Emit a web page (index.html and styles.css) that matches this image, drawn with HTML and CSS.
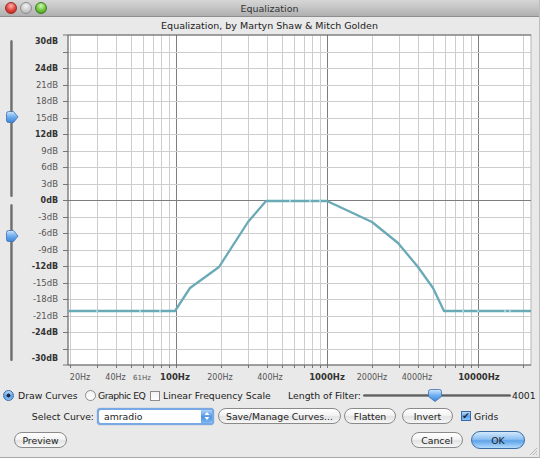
FILE: index.html
```html
<!DOCTYPE html>
<html lang="en">
<head>
    <meta charset="UTF-8">
    <title>Equalization</title>
    <link rel="stylesheet" href="styles.css">
</head>
<body>
    <div class="window">
        <div class="titlebar">
            <div class="lights">
                <span class="light red"></span>
                <span class="light off"></span>
                <span class="light green"></span>
            </div>
            <div class="title">Equalization</div>
        </div>

        <div class="subtitle">Equalization, by Martyn Shaw &amp; Mitch Golden</div>

        <div class="graph-area">
            <div class="vsliders">
                <div class="vslider">
                    <div class="vtrack"></div>
                    <svg class="vthumb thumb-top" width="14" height="12" viewBox="0 0 14 12">
                        <path d="M1.5 2.5 Q1.5 0.5 3.5 0.5 H8.5 L13 6 L8.5 11.5 H3.5 Q1.5 11.5 1.5 9.5 Z" fill="url(#thumbGrad)" stroke="#3d6fae" stroke-width="0.8"/>
                    </svg>
                </div>
                <div class="vslider">
                    <div class="vtrack"></div>
                    <svg class="vthumb thumb-bottom" width="14" height="12" viewBox="0 0 14 12">
                        <path d="M1.5 2.5 Q1.5 0.5 3.5 0.5 H8.5 L13 6 L8.5 11.5 H3.5 Q1.5 11.5 1.5 9.5 Z" fill="url(#thumbGrad)" stroke="#3d6fae" stroke-width="0.8"/>
                    </svg>
                </div>
            </div>

            <svg class="graph" width="517" height="353" viewBox="20 33 517 353">
                <defs>
                    <linearGradient id="thumbGrad" x1="0" y1="0" x2="0" y2="1">
                        <stop offset="0" stop-color="#cfe6fb"/>
                        <stop offset="0.5" stop-color="#6eaef0"/>
                        <stop offset="1" stop-color="#3d86dc"/>
                    </linearGradient>
                </defs>
                <rect x="68" y="35" width="463" height="330" fill="#fff" stroke="#b5b5b5"/>
                <g id="grid"></g>
                <line x1="68" y1="35" x2="531" y2="35" class="axis"/>
                <line x1="68" y1="35" x2="68" y2="365" class="axis"/>
                <line x1="68" y1="365" x2="531" y2="365" class="axis"/>

                <polyline class="curve" points="68,311 175,311 190,288 219,267 248,222 266,201 327,201 372,222 398,243 418,267 433,288 444,311 531,311"/>
                <g class="pts">
                    <circle cx="97" cy="311" r="1"/><circle cx="140" cy="311" r="1"/><circle cx="160" cy="311" r="1"/>
                    <circle cx="290" cy="201" r="1"/><circle cx="310" cy="201" r="1"/><circle cx="320" cy="201" r="1"/>
                    <circle cx="463" cy="311" r="1"/><circle cx="478" cy="311" r="1"/><circle cx="505" cy="311" r="1"/><circle cx="510" cy="311" r="1"/>
                </g>

                <g class="dblabels">
                    <text x="58" y="44" class="major">30dB</text>
                    <text x="58" y="71" class="major">24dB</text>
                    <text x="58" y="87.5">21dB</text>
                    <text x="58" y="104">18dB</text>
                    <text x="58" y="120.5">15dB</text>
                    <text x="58" y="137" class="major">12dB</text>
                    <text x="58" y="153.5">9dB</text>
                    <text x="58" y="170">6dB</text>
                    <text x="58" y="186.5">3dB</text>
                    <text x="58" y="203" class="major">0dB</text>
                    <text x="58" y="219.5">-3dB</text>
                    <text x="58" y="236">-6dB</text>
                    <text x="58" y="252.5">-9dB</text>
                    <text x="58" y="269" class="major">-12dB</text>
                    <text x="58" y="285.5">-15dB</text>
                    <text x="58" y="302">-18dB</text>
                    <text x="58" y="318.5">-21dB</text>
                    <text x="58" y="335" class="major">-24dB</text>
                    <text x="58" y="361" class="major">-30dB</text>
                </g>

                <g class="hzlabels">
                    <text x="80" y="380">20Hz</text>
                    <text x="115.5" y="380">40Hz</text>
                    <text x="142" y="380" class="tiny">61Hz</text>
                    <text x="175" y="380" class="major">100Hz</text>
                    <text x="220" y="380">200Hz</text>
                    <text x="270" y="380">400Hz</text>
                    <text x="327" y="380" class="major">1000Hz</text>
                    <text x="372" y="380">2000Hz</text>
                    <text x="417" y="380">4000Hz</text>
                    <text x="479" y="380" class="major">10000Hz</text>
                </g>
            </svg>
        </div>

        <div class="row row-mode">
            <label class="opt opt-draw"><span class="radio on"></span>Draw Curves</label>
            <label class="opt opt-graphic"><span class="radio"></span>Graphic EQ</label>
            <label class="opt opt-linear"><span class="check"></span>Linear Frequency Scale</label>
            <span class="filter-label">Length of Filter:</span>
            <div class="hslider">
                <div class="htrack"></div>
                <svg class="hthumb" width="14" height="13" viewBox="0 0 14 13">
                    <path d="M0.5 2.5 Q0.5 0.5 2.5 0.5 H11.5 Q13.5 0.5 13.5 2.5 V7.5 L7 12.5 L0.5 7.5 Z" fill="url(#thumbGrad)" stroke="#3d6fae" stroke-width="0.8"/>
                </svg>
            </div>
            <span class="filter-value">4001</span>
        </div>

        <div class="row row-curve">
            <span class="select-label">Select Curve:</span>
            <div class="select">
                <span class="select-text">amradio</span>
                <span class="stepper">
                    <svg width="6" height="10" viewBox="0 0 6 10"><path d="M0.5 4 L3 1 L5.5 4 Z M0.5 6 L3 9 L5.5 6 Z" fill="#fff"/></svg>
                </span>
            </div>
            <button class="button btn-save">Save/Manage Curves...</button>
            <button class="button btn-flatten">Flatten</button>
            <button class="button btn-invert">Invert</button>
            <label class="opt opt-grids"><span class="check on">&#10004;</span>Grids</label>
        </div>

        <div class="row row-actions">
            <button class="button btn-preview">Preview</button>
            <button class="button btn-cancel">Cancel</button>
            <button class="button btn-ok">OK</button>
        </div>

        <svg class="grip" width="8" height="8" viewBox="0 0 8 8">
            <path d="M8 1 L1 8 M8 4 L4 8 M8 7 L7 8" stroke="#aaa" stroke-width="0.8"/>
        </svg>
    </div>

    <script>
        // grid lines for the log frequency / dB plot
        const grid = document.getElementById('grid');
        const ns = 'http://www.w3.org/2000/svg';
        const xOf = f => 176 + 151 * Math.log10(f / 100);
        const yOf = db => 200 - db * 5.5;

        function addLine(x1, y1, x2, y2, cls) {
            const l = document.createElementNS(ns, 'line');
            l.setAttribute('x1', x1);
            l.setAttribute('y1', y1);
            l.setAttribute('x2', x2);
            l.setAttribute('y2', y2);
            l.setAttribute('class', cls);
            grid.appendChild(l);
        }

        [10, 100, 1000, 10000].forEach(decade => {
            for (let k = 1; k <= 9; k++) {
                const f = k * decade;
                if (f < 20 || f > 20000) continue;
                const x = Math.round(xOf(f)) + 0.5;
                addLine(x, 35, x, 365, k === 1 ? 'gl major' : 'gl');
                addLine(x, 365, x, 368, 'tick');
            }
        });

        for (let db = -27; db <= 27; db += 3) {
            const y = Math.round(yOf(db)) + 0.5;
            addLine(68, y, 531, y, db === 0 ? 'gl major' : 'gl');
            addLine(63, y, 68, y, 'tick');
        }
        addLine(63, 35, 68, 35, 'tick');
        addLine(63, 365, 68, 365, 'tick');
    </script>
</body>
</html>
```

FILE: styles.css
```css
body {
    margin: 0;
    background-color: #e9e9e9;
    font-family: "DejaVu Sans", Verdana, sans-serif;
    color: #222;
    overflow: hidden;
}
.window {
    position: relative;
    width: 540px;
    height: 458px;
    background-color: #e9e9e9;
    box-sizing: border-box;
    border-right: 1px solid #bdbdbd;
    border-bottom: 1px solid #a8a8a8;
}
.titlebar {
    position: relative;
    height: 16px;
    background: linear-gradient(#d6d6d6, #c0c0c0 60%, #b0b0b0);
    border-bottom: 1px solid #8e8e8e;
    display: flex;
    align-items: center;
    justify-content: center;
}
.lights {
    position: absolute;
    left: 5px;
    top: 2px;
    display: flex;
    gap: 3px;
}
.light {
    width: 12px;
    height: 12px;
    border-radius: 50%;
    box-sizing: border-box;
}
.light.red {
    background: radial-gradient(circle at 50% 30%, #ffb3ad, #e0433b 55%, #b0231c);
    border: 1px solid #9b2a23;
}
.light.off {
    background: radial-gradient(circle at 50% 30%, #f3f3f3, #c9c9c9 60%, #a9a9a9);
    border: 1px solid #8f8f8f;
}
.light.green {
    background: radial-gradient(circle at 50% 30%, #d3f7b0, #6bc33a 55%, #3f8e1e);
    border: 1px solid #3c7c22;
}
.title {
    font-size: 9.5px;
    color: #333;
}
.subtitle {
    height: 16px;
    line-height: 17px;
    font-size: 9.5px;
    text-align: center;
    color: #222;
}
.graph-area {
    display: flex;
    height: 353px;
}
.vsliders {
    width: 20px;
    display: flex;
    flex-direction: column;
    padding-top: 7px;
    gap: 7px;
}
.vslider {
    position: relative;
    height: 157px;
}
.vtrack {
    width: 3px;
    height: 100%;
    margin-left: 9.5px;
    border-radius: 2px;
    background: linear-gradient(90deg, #9a9a9a, #6f6f6f 50%, #a8a8a8);
}
.vthumb {
    position: absolute;
    left: 5px;
}
.thumb-top {
    top: 71px;
}
.thumb-bottom {
    top: 26px;
}
.graph {
    display: block;
}
.graph .gl {
    stroke: #cdcdcd;
    stroke-width: 1;
}
.graph .gl.major {
    stroke: #7d7d7d;
}
.graph .tick {
    stroke: #777;
    stroke-width: 1;
}
.graph .axis {
    stroke: #666;
    stroke-width: 1;
}
.graph .curve {
    fill: none;
    stroke: #6aaab7;
    stroke-width: 2.3;
    stroke-linejoin: round;
}
.graph .pts circle {
    fill: #b8dde6;
}
.dblabels text {
    font-family: "DejaVu Sans", sans-serif;
    font-size: 8.5px;
    fill: #555;
    text-anchor: end;
}
.dblabels text.major {
    fill: #333;
    font-weight: bold;
    font-size: 8px;
}
.hzlabels text {
    font-family: "DejaVu Sans", sans-serif;
    font-size: 8px;
    fill: #555;
    text-anchor: middle;
}
.hzlabels text.major {
    fill: #333;
    font-weight: bold;
    font-size: 8.5px;
}
.hzlabels text.tiny {
    font-size: 7px;
}
.row {
    display: flex;
    align-items: center;
    font-size: 9.3px;
    color: #222;
}
.row-mode {
    height: 19px;
    padding-left: 3px;
}
.row-curve {
    height: 22px;
}
.row-actions {
    height: 26px;
    padding-left: 14px;
    padding-right: 14px;
}
.opt {
    display: flex;
    align-items: center;
    gap: 4px;
    white-space: nowrap;
}
.opt-draw {
    width: 82px;
}
.opt-graphic {
    width: 65px;
    gap: 2px;
    letter-spacing: -0.5px;
}
.opt-linear {
    width: 138px;
    gap: 3px;
}
.radio {
    width: 11px;
    height: 11px;
    border-radius: 50%;
    box-sizing: border-box;
    border: 1px solid #8c8c8c;
    background: linear-gradient(#f2f2f2, #fff);
    flex-shrink: 0;
}
.radio.on {
    border-color: #3a6aa8;
    background: radial-gradient(circle, #1d2a3a 0 1.8px, transparent 2.2px), linear-gradient(#bcdcfa, #5c9fe8 55%, #8cc3f5);
}
.check {
    width: 10px;
    height: 10px;
    box-sizing: border-box;
    border: 1px solid #8c8c8c;
    background: linear-gradient(#f2f2f2, #fff);
    flex-shrink: 0;
    font-size: 9px;
    line-height: 9px;
    text-align: center;
    color: #1c2633;
}
.check.on {
    border-color: #3a6aa8;
    background: linear-gradient(#bcdcfa, #5c9fe8 55%, #8cc3f5);
}
.filter-label {
    width: 75px;
    white-space: nowrap;
}
.hslider {
    position: relative;
    width: 148px;
    height: 14px;
}
.htrack {
    margin-top: 5px;
    height: 3px;
    border-radius: 2px;
    background: linear-gradient(#9a9a9a, #5f5f5f 50%, #a8a8a8);
}
.hthumb {
    position: absolute;
    left: 65px;
    top: 0;
}
.filter-value {
    margin-left: 1px;
}
.select-label {
    width: 97px;
    padding-right: 3px;
    box-sizing: border-box;
    text-align: right;
}
.select {
    width: 117px;
    height: 17px;
    box-sizing: border-box;
    border: 2px solid #78a9e4;
    border-radius: 4px;
    background: #fff;
    display: flex;
    align-items: center;
    justify-content: space-between;
    box-shadow: 0 0 1px #4a7fc1;
}
.select-text {
    padding-left: 5px;
}
.stepper {
    width: 11px;
    height: 13px;
    border-radius: 0 2px 2px 0;
    background: linear-gradient(#a9d1fa, #4f93e2 55%, #7db8f2);
    display: flex;
    align-items: center;
    justify-content: center;
}
.button {
    font-family: "DejaVu Sans", Verdana, sans-serif;
    font-size: 9.3px;
    color: #222;
    height: 16px;
    padding: 0;
    border: 1px solid #8a8a8a;
    border-radius: 8px;
    background: linear-gradient(#ffffff, #f3f3f3 45%, #e3e3e3 55%, #f7f7f7);
    cursor: pointer;
    white-space: nowrap;
}
.btn-save {
    width: 123px;
    margin-left: 4px;
}
.btn-flatten {
    width: 52px;
    margin-left: 3px;
}
.btn-invert {
    width: 51px;
    margin-left: 6px;
}
.opt-grids {
    margin-left: 8px;
    gap: 3px;
}
.btn-preview {
    width: 53px;
}
.btn-cancel {
    width: 52px;
    margin-left: auto;
}
.btn-ok {
    width: 54px;
    height: 18px;
    margin-left: 8px;
    border-color: #3d6ba6;
    border-radius: 9px;
    background: linear-gradient(#d3e9fc, #8cc0f2 45%, #5fa3ea 55%, #b3dcfb);
}
.grip {
    position: absolute;
    right: 2px;
    bottom: 2px;
}
```
